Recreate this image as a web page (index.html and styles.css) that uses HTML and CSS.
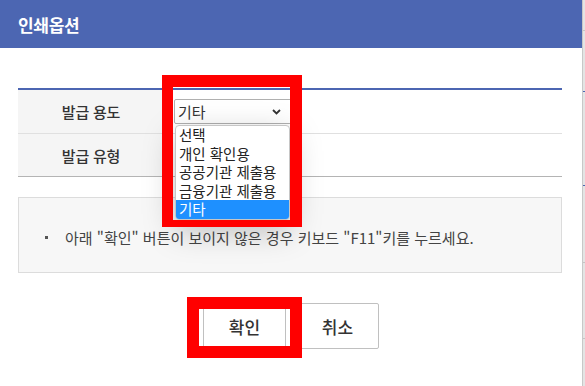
FILE: index.html
```html
<!DOCTYPE html>
<html lang="ko">
<head>
<meta charset="utf-8">
<title>인쇄옵션</title>
<link rel="stylesheet" href="styles.css">
</head>
<body>
<div class="dialog">
  <div class="header"><h1 class="title">인쇄옵션</h1></div>
  <div class="content">
    <div class="table">
      <div class="row row-first">
        <div class="label">발급 용도</div>
        <div class="value">
          <div class="select">
            <span class="select-text">기타</span>
            <svg class="chev" width="9" height="6" viewBox="0 0 9 6"><polyline points="1,1 4.5,4.5 8,1" fill="none" stroke="#333" stroke-width="1.8"/></svg>
            <ul class="options">
              <li>선택</li>
              <li>개인 확인용</li>
              <li>공공기관 제출용</li>
              <li>금융기관 제출용</li>
              <li class="active">기타</li>
            </ul>
          </div>
        </div>
      </div>
      <div class="row row-last">
        <div class="label">발급 유형</div>
        <div class="value"></div>
      </div>
    </div>
    <div class="notice">
      <span class="bullet"></span>
      <span class="notice-text">아래 "확인" 버튼이 보이지 않은 경우 키보드 "F11"키를 누르세요.</span>
    </div>
    <div class="buttons">
      <button class="btn">확인</button>
      <button class="btn">취소</button>
    </div>
  </div>
  <div class="mark mark-select"></div>
  <div class="mark mark-button"></div>
</div>
<div class="side">
  <div class="side-line l1"></div>
  <div class="side-line blue l2"></div>
  <div class="side-line blue l3"></div>
  <div class="side-line l4"></div>
  <div class="side-line l5"></div>
</div>
</body>
</html>
```
FILE: styles.css
```css
* { box-sizing: border-box; }
html, body { margin: 0; padding: 0; }
body {
  width: 585px;
  height: 386px;
  overflow: hidden;
  background: #e6e6e6;
  display: flex;
  font-family: "Noto Sans CJK KR", "Noto Sans", sans-serif;
  color: #333;
}
.dialog {
  position: relative;
  width: 582px;
  height: 386px;
  background: #fff;
  flex: none;
}
.side {
  position: relative;
  flex: 1;
  border-left: 1px solid #c8c8c8;
  background: #e4e4e4;
}
.side-line { position: absolute; left: 0; right: 0; height: 1px; background: #c4c4c4; }
.side-line.blue { background: #4c66b2; }
.l1 { top: 30px; } .l2 { top: 91px; } .l3 { top: 185px; } .l4 { top: 262px; } .l5 { top: 338px; }

.header {
  height: 48px;
  background: #4c66b2;
  display: flex;
  align-items: center;
  padding-left: 18px;
}
.title {
  margin: 0;
  color: #fff;
  font-size: 17px;
  font-weight: bold;
  line-height: 1;
  letter-spacing: -0.3px;
}
.content { padding: 40px 20px 0 18px; }
.table { border-top: 2px solid #4c66b2; }
.row { display: flex; }
.row-first { height: 44px; border-bottom: 1px solid #e0e0e0; }
.row-last { height: 43px; border-bottom: 1px solid #b4b4b4; }
.label {
  width: 146px;
  background: #f5f5f5;
  display: flex;
  align-items: center;
  justify-content: center;
  font-size: 15px;
  font-weight: 500;
  color: #333;
  letter-spacing: -0.2px;
}
.value {
  flex: 1;
  display: flex;
  align-items: center;
  padding-left: 10px;
}
.select {
  position: relative;
  width: 119px;
  height: 25px;
  border: 1px solid #b0b0b0;
  border-radius: 2px;
  background: #fff;
  display: flex;
  align-items: center;
  padding-left: 3px;
  font-size: 15px;
  color: #333;
  line-height: 1;
}
.select-text { flex: 1; }
.chev { margin-right: 11px; }
.options {
  position: absolute;
  top: 25px;
  left: 0;
  width: 115px;
  margin: 0;
  padding: 0;
  list-style: none;
  background: #fff;
  border: 1px solid #c6c6c6;
  border-radius: 4px;
  box-shadow: 0 10px 32px rgba(0, 0, 0, 0.25);
  z-index: 2;
  overflow: hidden;
}
.options li {
  height: 18.5px;
  line-height: 18.5px;
  padding-left: 3px;
  font-size: 14.5px;
  color: #222;
  white-space: nowrap;
}
.options li.active { background: #1e90ff; color: #fff; }

.notice {
  margin-top: 20px;
  height: 76px;
  background: #f7f7f7;
  border: 1px solid #dcdcdc;
  display: flex;
  align-items: center;
  padding-left: 26px;
  padding-top: 4px;
}
.bullet {
  width: 3px;
  height: 3px;
  background: #555;
  margin-right: 17px;
}
.notice-text {
  font-size: 15px;
  color: #444;
  letter-spacing: 0;
}
.buttons {
  margin-top: 30px;
  display: flex;
  justify-content: center;
  gap: 10px;
  padding-left: 2px;
}
.btn {
  width: 83px;
  height: 46px;
  border: 1px solid #c0c0c0;
  border-radius: 2px;
  background: #fff;
  font-family: "Noto Sans CJK KR", "Noto Sans", sans-serif;
  font-size: 17px;
  font-weight: 500;
  color: #333;
  padding: 0;
}
.mark {
  position: absolute;
  border-style: solid;
  border-color: #ff0000;
  z-index: 3;
}
.mark-select {
  left: 162px;
  top: 75px;
  width: 140px;
  height: 152px;
  border-width: 12px 12px 7px 11px;
}
.mark-button {
  left: 187px;
  top: 297px;
  width: 115px;
  height: 61px;
  border-width: 12px;
}
```
